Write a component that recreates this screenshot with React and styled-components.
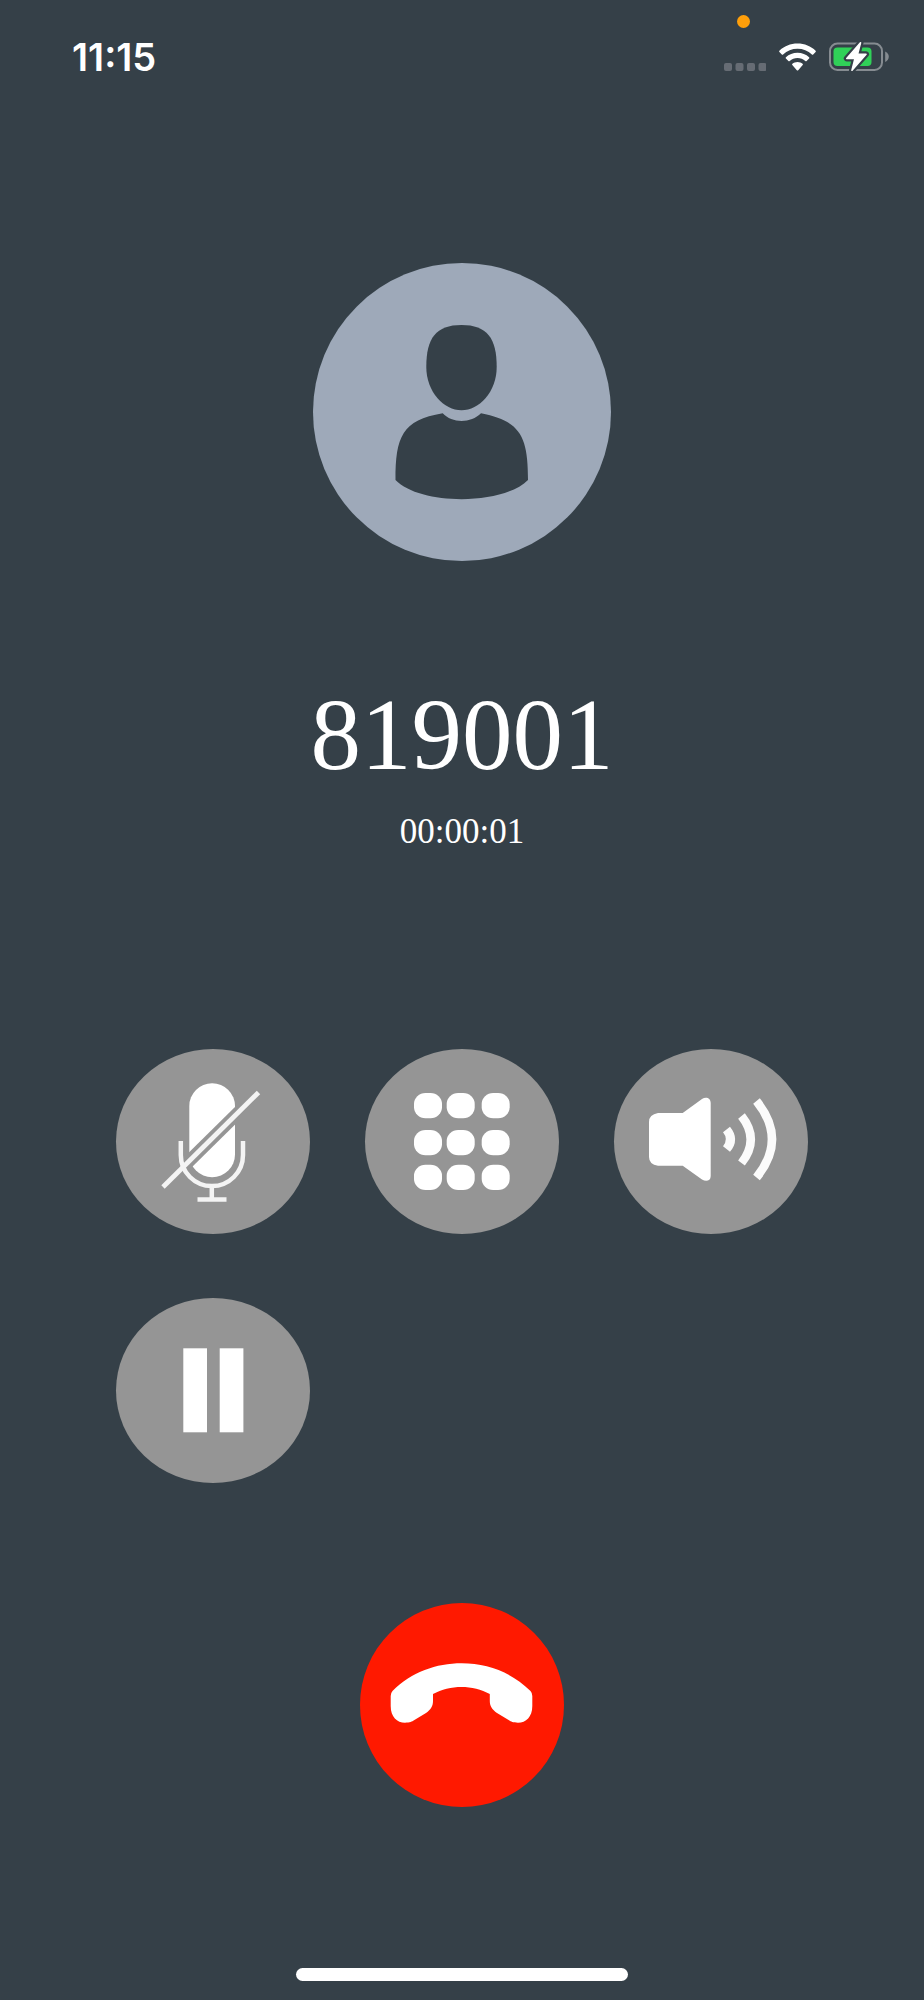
import React from "react";
import styled, { createGlobalStyle } from "styled-components";

const GlobalStyle = createGlobalStyle`
  * {
    box-sizing: border-box;
  }

  body {
    margin: 0;
    background: #354048;
  }
`;

const Screen = styled.div`
  min-height: 100vh;
  display: flex;
  flex-direction: column;
  align-items: center;
  background: #354048;
  color: #ffffff;
  font-family: "Liberation Serif", "Times New Roman", serif;
`;

const StatusBar = styled.header`
  align-self: stretch;
  display: flex;
  justify-content: space-between;
  align-items: flex-end;
  padding: 35px 35px 0 72px;
`;

const Clock = styled.time`
  font-family: Inter, sans-serif;
  font-size: 38px;
  font-weight: 600;
  line-height: 44px;
`;

const StatusIcons = styled.div`
  position: relative;
  display: flex;
  align-items: flex-end;
  gap: 13px;
  padding-bottom: 8px;
`;

const StatusSvg = styled.svg`
  display: block;
`;

const PrivacyDot = styled.span`
  position: absolute;
  top: -27px;
  left: 13px;
  width: 13px;
  height: 13px;
  border-radius: 50%;
  background: #ff9f0a;
`;

const Call = styled.main`
  display: flex;
  flex-direction: column;
  align-items: center;
  padding: 184px 24px 64px;
`;

const Avatar = styled.svg`
  display: block;
  width: 298px;
  height: 298px;
`;

const CallerNumber = styled.h1`
  margin: 118px 0 21px;
  font-size: 101px;
  font-weight: 400;
  line-height: 112px;
`;

const Duration = styled.time`
  font-size: 35px;
  line-height: 40px;
`;

const Controls = styled.div`
  display: grid;
  grid-template-columns: repeat(3, 194px);
  gap: 64px 55px;
  margin: 197px 0 120px;
`;

const RoundButton = styled.button`
  width: ${(props) => props.$width}px;
  height: ${(props) => props.$height}px;
  padding: 0;
  border: none;
  border-radius: 50%;
  background: ${(props) => props.$color};
  cursor: pointer;

  svg {
    display: block;
    width: 100%;
    height: 100%;
  }
`;

const HomeIndicator = styled.div`
  width: 36%;
  height: 13px;
  margin: auto 0 19px;
  border-radius: 7px;
  background: #ffffff;
`;

function SignalIcon() {
  return (
    <StatusSvg width="42" height="8" viewBox="0 0 42 8" fill="#666c74">
      <rect x="0" width="8" height="8" rx="2" />
      <rect x="11.5" width="8" height="8" rx="2" />
      <rect x="23" width="8" height="8" rx="2" />
      <rect x="34.5" width="8" height="8" rx="2" />
    </StatusSvg>
  );
}

function WifiIcon() {
  return (
    <StatusSvg width="37" height="28" viewBox="0 0 37 28" fill="#ffffff">
      <path d="M18.5 0.5C25.5 0.5 32 3.2 36.6 7.7C37 8.1 37 8.6 36.6 9L34.2 11.4C33.8 11.8 33.3 11.8 32.9 11.4C29 7.7 24 5.8 18.5 5.8S8 7.7 4.1 11.4C3.7 11.8 3.2 11.8 2.8 11.4L0.4 9C0 8.6 0 8.1 0.4 7.7C5 3.2 11.5 0.5 18.5 0.5Z" />
      <path d="M18.5 9.8C23 9.8 27 11.5 30.1 14.3C30.5 14.7 30.5 15.2 30.1 15.6L27.6 18C27.2 18.4 26.7 18.4 26.3 18C24.2 16.1 21.5 15 18.5 15S12.8 16.1 10.7 18C10.3 18.4 9.8 18.4 9.4 18L6.9 15.6C6.5 15.2 6.5 14.7 6.9 14.3C10 11.5 14 9.8 18.5 9.8Z" />
      <path d="M18.5 18.9C20.5 18.9 22.2 19.6 23.6 20.7C24.1 21.1 24.1 21.6 23.7 22L19.2 27.3C18.8 27.7 18.2 27.7 17.8 27.3L13.3 22C12.9 21.6 12.9 21.1 13.4 20.7C14.8 19.6 16.5 18.9 18.5 18.9Z" />
    </StatusSvg>
  );
}

function BatteryIcon() {
  const bolt = "M31.5 0.8L17.8 16.5H26L23 28.3L37 12.3H28.5Z";
  return (
    <StatusSvg width="60" height="29" viewBox="0 0 60 29">
      <rect
        x="1"
        y="1.5"
        width="52"
        height="26.5"
        rx="7.5"
        fill="none"
        stroke="#868c91"
        strokeWidth="2"
      />
      <path d="M56.2 9.5C58.5 10.5 59.8 12.5 59.8 14.7S58.5 19 56.2 20Z" fill="#868c91" />
      <rect x="4.5" y="5.5" width="38" height="18.5" rx="4" fill="#30d158" />
      <path d={bolt} fill="#354048" stroke="#354048" strokeWidth="6" strokeLinejoin="round" />
      <path d={bolt} fill="#ffffff" stroke="#ffffff" strokeWidth="1.6" strokeLinejoin="round" />
    </StatusSvg>
  );
}

function PersonAvatar() {
  return (
    <Avatar viewBox="0 0 298 298" role="img" aria-label="Caller">
      <circle cx="149" cy="149" r="149" fill="#9ea9b9" />
      <g fill="#354048">
        <path d="M148.5 62C174 62 183.7 75 183.7 104C183.7 129 166 147.3 148.5 147.3S113.3 129 113.3 104C113.3 75 123 62 148.5 62Z" />
        <path d="M129.7 150.3C139 160.5 158 160.5 168 150.3C208 158 215 174 215 217C190 242.5 107 242.5 82.5 217C82.5 174 89 157 129.7 150.3Z" />
      </g>
    </Avatar>
  );
}

function MuteIcon() {
  return (
    <svg viewBox="0 0 194 185" fill="none" stroke="#f4f4f4" strokeWidth="4.5">
      <rect x="73.3" y="34.3" width="45.7" height="94" rx="22.8" fill="#ffffff" stroke="none" />
      <path d="M133 53L60 125" stroke="#959595" strokeWidth="12.5" />
      <path d="M64.8 92V106A31 31 0 0 0 127 106V92" />
      <path d="M95.8 137V150M81.5 150.5H110.5" />
      <path d="M142.5 43.5L47 138" strokeWidth="4.8" />
    </svg>
  );
}

function KeypadIcon() {
  const columns = [49, 81.7, 116.7];
  const rows = [44, 81, 115.7];
  return (
    <svg viewBox="0 0 194 185" fill="#ffffff">
      {rows.map((y) =>
        columns.map((x) => (
          <rect key={`${x}-${y}`} x={x} y={y} width="28" height="25.3" rx="11.5" ry="11" />
        ))
      )}
    </svg>
  );
}

function SpeakerIcon() {
  return (
    <svg viewBox="0 0 194 185" fill="none" stroke="#fbfbfb" strokeWidth="8.5">
      <path
        d="M44 64H68.7L88 50C92 47.5 96.7 49 96.7 54V127C96.7 132 92 133 88 130.5L68.7 116.700H44Q35 115.5 35 108V73Q35 65.5 44 64Z"
        fill="#ffffff"
        stroke="none"
      />
      <path d="M112.5 80.500Q120.5 90.3 112.5 100" strokeWidth="9" />
      <path d="M127.500 67Q146 90.3 127.500 114" />
      <path d="M142.500 52Q173.5 90.3 142.500 128.5" />
    </svg>
  );
}

function PauseIcon() {
  return (
    <svg viewBox="0 0 194 185" fill="#ffffff">
      <rect x="67.3" y="50.3" width="23.7" height="84" />
      <rect x="103.7" y="50.3" width="23.7" height="84" />
    </svg>
  );
}

function HangUpIcon() {
  return (
    <svg viewBox="0 0 204 204" fill="#ffffff">
      <path d="M32.5 88C52 69 76 60.3 101.700 60.3S151 69 170.500 88Q172.3 90 172.3 93V103C172.3 114 166 119.700 158 119.700C153 119.700 151 118.500 149 117.3L137 110C132 106.5 129.8 103 129.8 98V91C113 81.500 90 81.500 73 91V98C73 103 71 106.5 66 110L54 117.3C52 118.500 50 119.700 45 119.700C37 119.700 30.7 114 30.7 103V93Q30.7 90 32.5 88Z" />
    </svg>
  );
}

const controls = [
  { label: "Mute", Icon: MuteIcon },
  { label: "Keypad", Icon: KeypadIcon },
  { label: "Speaker", Icon: SpeakerIcon },
  { label: "Hold", Icon: PauseIcon },
];

function App() {
  return (
    <Screen>
      <GlobalStyle />
      <StatusBar>
        <Clock>11:15</Clock>
        <StatusIcons>
          <PrivacyDot />
          <SignalIcon />
          <WifiIcon />
          <BatteryIcon />
        </StatusIcons>
      </StatusBar>
      <Call>
        <PersonAvatar />
        <CallerNumber>819001</CallerNumber>
        <Duration>00:00:01</Duration>
        <Controls>
          {controls.map(({ label, Icon }) => (
            <RoundButton
              key={label}
              type="button"
              aria-label={label}
              $width={194}
              $height={185}
              $color="#959595"
            >
              <Icon />
            </RoundButton>
          ))}
        </Controls>
        <RoundButton
          type="button"
          aria-label="End call"
          $width={204}
          $height={204}
          $color="#ff1900"
        >
          <HangUpIcon />
        </RoundButton>
      </Call>
      <HomeIndicator />
    </Screen>
  );
}

export default App;
